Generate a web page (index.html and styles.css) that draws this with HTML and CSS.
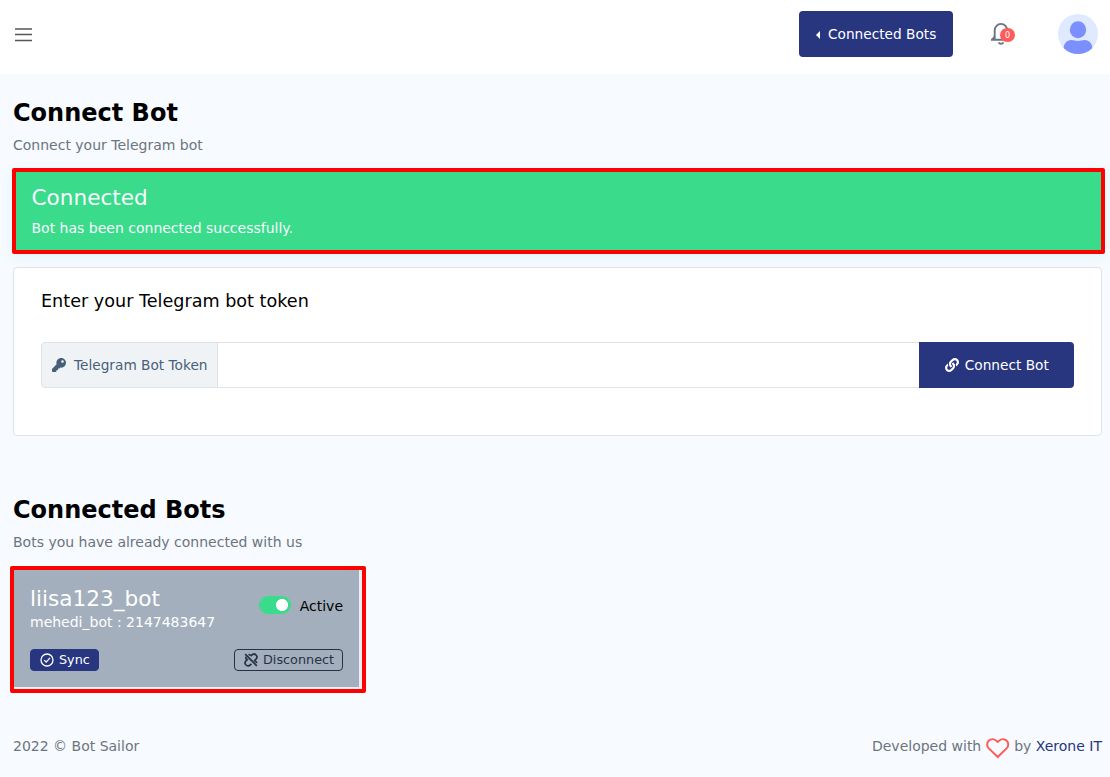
FILE: index.html
```html
<!DOCTYPE html>
<html lang="en">
<head>
<meta charset="utf-8">
<title>Connect Bot</title>
<link rel="stylesheet" href="styles.css">
</head>
<body>
<header class="topbar">
  <svg class="burger" viewBox="0 0 18 14"><path d="M0 1h17M0 6.500h17M0 12.500h17"/></svg>
  <a class="btn back"><i class="caret"></i>Connected Bots</a>
  <div class="bell">
    <svg viewBox="0 0 24 24"><path d="M2 17.700h20M5.700 17V8.500a6.300 6.600 0 0 1 12.600 0v5c0 1 .6 2 2 3.600M5.700 13.500c0 1.500-.9 2.600-2.600 3.900M9.600 20.300a2.600 2.400 0 0 0 4.800 0"/></svg>
    <span class="badge">0</span>
  </div>
  <svg class="avatar" viewBox="0 0 40 40"><clipPath id="disc"><circle cx="20" cy="20" r="20"/></clipPath><circle cx="20" cy="20" r="20" fill="#dfe9ff"/><g clip-path="url(#disc)" fill="#7b8fff"><ellipse cx="20" cy="15.700" rx="8.200" ry="8.500"/><path d="M5.500 35c0-5 3-9 8-9 2 0 4 1 6.500 1s4.500-1 6.500-1c5 0 8 4 8 9v5h-29z"/></g></svg>
</header>
<main class="page">
  <h1>Connect Bot</h1>
  <p class="sub">Connect your Telegram bot</p>
  <section class="alert">
    <h2>Connected</h2>
    <p>Bot has been connected successfully.</p>
  </section>
  <section class="card">
    <h3>Enter your Telegram bot token</h3>
    <div class="group">
      <label class="prefix"><svg viewBox="0 0 512 512"><path d="M512 176.001C512 273.203 433.202 352 336 352c-11.220 0-22.190-1.062-32.827-3.069l-24.012 27.014A23.999 23.999 0 0 1 261.223 384H224v40c0 13.255-10.745 24-24 24h-40v40c0 13.255-10.745 24-24 24H24c-13.255 0-24-10.745-24-24v-78.059c0-6.365 2.529-12.470 7.029-16.971l161.802-161.802C163.108 213.814 160 195.271 160 176 160 78.798 238.797.001 335.999 0 433.488-.001 512 78.511 512 176.001zM336 128c0 26.510 21.490 48 48 48s48-21.490 48-48-21.490-48-48-48-48 21.490-48 48z"/></svg>Telegram Bot Token</label>
      <input class="field" type="text">
      <button class="btn connect"><svg viewBox="0 0 512 512"><path d="M326.612 185.391c59.747 59.809 58.927 155.698.36 214.590-.11.12-.24.25-.36.37l-67.200 67.200c-59.270 59.270-155.699 59.262-214.960 0-59.270-59.260-59.270-155.700 0-214.960l37.106-37.106c9.840-9.840 26.786-3.300 27.294 10.606.648 17.722 3.826 35.527 9.690 52.721 1.986 5.822.567 12.262-3.783 16.612l-13.087 13.087c-28.026 28.026-28.905 73.660-1.155 101.960 28.024 28.579 74.086 28.749 102.325.51l67.200-67.190c28.191-28.191 28.073-73.757 0-101.830-3.701-3.694-7.429-6.564-10.341-8.569a16.037 16.037 0 0 1-6.947-12.606c-.396-10.567 3.348-21.456 11.698-29.806l21.054-21.055c5.521-5.521 14.182-6.199 20.584-1.731a152.482 152.482 0 0 1 20.522 17.197zM467.547 44.449c-59.261-59.262-155.690-59.270-214.960 0l-67.200 67.200c-.12.12-.25.25-.36.37-58.566 58.892-59.387 154.781.36 214.590a152.454 152.454 0 0 0 20.521 17.196c6.402 4.468 15.064 3.789 20.584-1.731l21.054-21.055c8.350-8.350 12.094-19.239 11.698-29.806a16.037 16.037 0 0 0-6.947-12.606c-2.912-2.005-6.640-4.875-10.341-8.569-28.073-28.073-28.191-73.639 0-101.830l67.200-67.190c28.239-28.239 74.300-28.069 102.325.51 27.750 28.300 26.872 73.934-1.155 101.960l-13.087 13.087c-4.350 4.350-5.769 10.790-3.783 16.612 5.864 17.194 9.042 34.999 9.690 52.721.509 13.906 17.454 20.446 27.294 10.606l37.106-37.106c59.271-59.259 59.271-155.699.001-214.959z"/></svg>Connect Bot</button>
    </div>
  </section>
  <h1 class="second">Connected Bots</h1>
  <p class="sub">Bots you have already connected with us</p>
  <section class="bot">
    <div class="bot-body">
      <div class="row info">
        <div class="names"><h2>liisa123_bot</h2><p>mehedi_bot : 2147483647</p></div>
        <div class="state"><span class="switch"></span>Active</div>
      </div>
      <div class="row">
        <button class="small sync"><svg viewBox="0 0 14 14"><circle cx="7" cy="7" r="6"/><path d="M4.200 7.100l2 2 3.800-4.200"/></svg>Sync</button>
        <button class="small disconnect"><svg viewBox="0 0 14 14"><path d="M1.200 1.200l11.600 11.600M6.600 3.200l1-1C9 .8 10.900.9 12 2s1.100 3-.2 4.300L10 7.800M4.400 1.500c.9 0 1.600.3 2.200.9M7.400 10.800l-1 1C5 13.200 3.100 13.100 2 12s-1.100-3 .2-4.300L4 6.200M2 3.700C1.600 4.800 1.800 5.600 2.500 6.400M10.500 8c1.400.2 2.200 1 2.300 2.100"/></svg>Disconnect</button>
      </div>
    </div>
  </section>
</main>
<footer class="footer">
  <span>2022 © Bot Sailor</span>
  <span class="credit">Developed with <svg viewBox="0 0 24 24"><path d="M11.700 21L2.600 12.100C.7 10.100.7 6.700 2.600 4.700c2.200-2.100 5.500-2 7.500-.1L11.700 6l1.600-1.400c2-1.900 5.300-2 7.500.1 1.900 2 1.900 5.400 0 7.400z"/></svg> by <a>Xerone IT</a></span>
</footer>
</body>
</html>
```
FILE: styles.css
```css
* { box-sizing: border-box; margin: 0; }
body { background: #f7faff; font: 14px/22px "DejaVu Sans", sans-serif; color: #000; height: 777px; overflow: hidden; }
button, input { font: inherit; }
svg { flex: none; }
.topbar { height: 74px; background: #fff; display: flex; align-items: flex-start; padding: 11px 12px 0 15px; }
.burger { width: 18px; height: 14px; margin: 17px auto 0 0; fill: none; stroke: #555; stroke-width: 1.300; }
.btn { background: #27367f; color: #fff; border: 0; height: 46px; display: flex; align-items: center; }
.back { width: 154px; border-radius: 4px; padding-left: 17px; font-size: 13.700px; }
.caret { border: 4px solid transparent; border-right-color: #fff; border-left: 0; margin: 1px 8px 0 0; }
.bell { position: relative; width: 24px; height: 24px; margin: 11px 45px 0 36px; }
.bell svg { width: 24px; height: 24px; fill: none; stroke: #6c757d; stroke-width: 1.900; display: block; }
.badge { position: absolute; left: 11px; top: 6px; width: 15px; height: 14px; border-radius: 7px; background: #ff5b5c; color: #fff; font-size: 8px; line-height: 15px; text-align: center; }
.avatar { width: 40px; height: 40px; margin-top: 3px; }
.page { padding: 25px 8px 0 13px; }
h1 { font-size: 24px; line-height: 28px; font-weight: 700; margin-bottom: 7px; }
h2, h3 { font-weight: 400; }
.sub { color: #6c757d; }
.alert { height: 86px; margin: 12px -3px 13px -1px; border: 4px solid #f00; border-radius: 2px; background: #3adb8a; color: #f7faff; padding: 12px 15.500px; box-shadow: 0 3px 12px rgba(57, 218, 200, .12); }
.alert h2, .names h2 { font-size: 21.600px; line-height: 28px; }
.alert p { margin-top: 5px; }
.card { height: 169px; background: #fff; border: 1px solid #dfe3e7; border-radius: 4px; padding: 20px 27px; }
.card h3 { font-size: 17.600px; line-height: 26px; margin-bottom: 28px; }
.group { display: flex; height: 46px; }
.prefix { width: 177px; display: flex; align-items: center; padding-left: 9.500px; background: #f0f3f6; color: #475f7b; border: 1px solid #dfe3e7; border-radius: 4px 0 0 4px; font-size: 13.700px; }
.prefix svg { width: 14px; height: 14px; margin-right: 8.500px; fill: #475f7b; }
.field { flex: 1; min-width: 0; border: 1px solid #dfe3e7; border-width: 1px 0; outline: 0; padding: 0 12px; }
.connect { width: 155px; border-radius: 0 4px 4px 0; justify-content: center; gap: 5.500px; padding: 0 0 0 1px; font-size: 13.700px; }
.connect svg { width: 14px; height: 14px; fill: #fff; }
.second { margin-top: 60px; }
.bot { width: 356px; height: 127px; margin: 13px 0 0 -3px; border: 4px solid #f00; border-radius: 2px; background: #e9eff7; padding: 0 3px 2px 0; }
.bot-body { height: 117px; background: #a3afbd; padding: 15px 16px 0; }
.row { display: flex; justify-content: space-between; }
.info { height: 64px; }
.names { color: #fff; }
.names p { line-height: 18px; }
.state { display: flex; gap: 9px; padding-top: 10px; height: 32px; }
.switch { width: 32px; height: 18px; margin-top: 1px; border-radius: 9px; background: radial-gradient(circle at 23px 9px, #fff 5.700px, #3adb8a 6.300px); }
.small { height: 22px; font-size: 12.800px; line-height: 20px; display: flex; align-items: center; border: 1px solid #27367f; border-radius: 4px; padding: 0 9px; gap: 5px; }
.small svg { width: 14px; height: 14px; fill: none; stroke: currentColor; stroke-width: 1.300; }
.sync { width: 69px; background: #27367f; color: #fff; }
.disconnect { width: 109px; background: none; border-color: #283144; color: #283144; }
.disconnect svg { stroke-width: 1.700; }
.footer { display: flex; justify-content: space-between; padding: 42px 8px 0 13px; color: #6c757d; }
.credit { display: flex; white-space: pre; }
.credit svg { width: 24px; height: 24px; margin: 1px 0 0; fill: none; stroke: #ff5b5c; stroke-width: 2; }
.credit a { color: #27367f; }
```
